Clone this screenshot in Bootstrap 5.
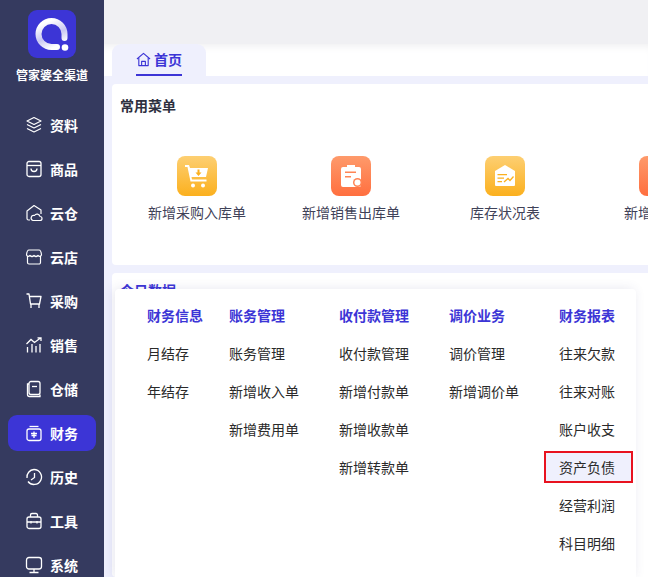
<!DOCTYPE html>
<html lang="zh-CN">
<head>
<meta charset="utf-8">
<title>管家婆全渠道</title>
<link href="https://cdn.jsdelivr.net/npm/bootstrap@5.3.0/dist/css/bootstrap.min.css" rel="stylesheet">
<style>
html,body{height:100%;margin:0;overflow:hidden}
body{font-family:"Noto Sans CJK SC","Liberation Sans",sans-serif;font-size:14px;color:#333;background:#fff}
.shell{height:577px;width:648px;overflow:hidden}
.side{width:104px;flex:none;background:#353a5f;color:#fff}
.brand{padding-top:10px;height:103px}
.logo{width:48px;height:48px;border-radius:9px;background:#3c35d6}
.brand-name{font-size:12px;font-weight:700;line-height:16px;margin-top:9px;letter-spacing:0}
.side-item{height:44px;padding:0 8px}
.side-link{height:36px;width:88px;border-radius:9px;font-weight:700;font-size:14px;padding-left:17px;gap:7px;color:#fff}
.side-link svg{width:18px;height:18px;flex:none}
.side-link.on{background:#3c35d6}
.main{flex:1 1 auto;min-width:0;background:#eff0fd;position:relative}
.topbar{height:44px;background:#f0f0f3}
.tabbar{height:32px;background:#fff;padding-left:8px;box-shadow:inset 0 8px 8px -6px #eeeef0}
.tab{width:94px;height:32px;background:#eff0fd;border-radius:9px 9px 0 0;color:#3c35d6;font-weight:700;padding-left:24px}
.tab-in{height:32px;gap:3px;border-bottom:2px solid #3c35d6;width:46px}
.tab-in svg{width:15px;height:15px;flex:none}
.panel{margin:8px 0 0 8px;background:#fff;border-radius:4px 0 0 4px}
.panel-a{height:181px;padding:11px 8px 0}
.panel-b{height:304px;padding:7px 8px 0}
.panel-title{font-size:14px;font-weight:700;line-height:20px;color:#2e3040}
.panel-title.blue{color:#3c35d6}
.quick{margin-top:41px;width:640px}
.quick-item{width:154px;flex:none;color:#3f4258;font-size:14px}
.qicon{width:40px;height:40px;border-radius:8px;margin-bottom:7px}
.qicon svg{width:28px;height:28px}
.q-y{background:linear-gradient(#fdcf72,#fbb01e)}
.q-o{background:linear-gradient(#fe9a6b,#ff6f3f)}
.quick-label{line-height:18px;white-space:nowrap}
.menu{position:absolute;left:11px;top:289px;width:521px;height:288px;background:#fff;box-shadow:-2px 0 12px rgba(60,60,120,.12);padding:15px 0 0 32px;border-radius:4px 4px 0 0}
.m-col{flex:none}
.m-head{height:22px;line-height:22px;color:#3c35d6;font-size:14px;font-weight:700;margin-bottom:11px;white-space:nowrap}
.m-link{height:32px;line-height:32px;margin-bottom:6px;font-size:14px;color:#2a2a2a;white-space:nowrap}
.m-link.hit{background:#eff0fd;outline:2px solid #e8121f;outline-offset:-2px;margin:0 0 6px -15px;padding-left:15px;width:89px}
.c1{width:82px}.c2{width:110px}
</style>
</head>
<body>
<div class="shell d-flex">
<aside class="side">
  <div class="brand d-flex flex-column align-items-center">
    <div class="logo d-flex align-items-center justify-content-center">
      <svg width="36" height="36" viewBox="0 0 36 36"><defs><linearGradient id="lg" x1="0.2" y1="0.1" x2="0.6" y2="1"><stop offset="0" stop-color="#fff"/><stop offset=".55" stop-color="#c9c7f2"/><stop offset="1" stop-color="#fff"/></linearGradient></defs><path d="M30.500 22V18A13 13 0 1 0 17.500 31H23" fill="none" stroke="url(#lg)" stroke-width="6" stroke-linecap="round"/><circle cx="31" cy="31.500" r="3.300" fill="#fff"/></svg>
    </div>
    <div class="brand-name">管家婆全渠道</div>
  </div>
  <div class="side-item d-flex align-items-center"><div class="side-link d-flex align-items-center"><svg viewBox="0 0 18 18" fill="none" stroke="#fff" stroke-width="1.2" stroke-linejoin="round"><path d="M9 1.500 16 5 9 8.500 2 5Z"/><path d="M2 8.500 9 12 16 8.500"/><path d="M2 12.500 9 16 16 12.500"/></svg><span>资料</span></div></div>
  <div class="side-item d-flex align-items-center"><div class="side-link d-flex align-items-center"><svg viewBox="0 0 18 18" fill="none" stroke="#fff" stroke-width="1.3"><rect x="2" y="1.500" width="14" height="15" rx="2"/><path d="M2 5.500H16"/><path d="M6 8.500C6 12.500 12 12.500 12 8.500"/></svg><span>商品</span></div></div>
  <div class="side-item d-flex align-items-center"><div class="side-link d-flex align-items-center"><svg viewBox="0 0 18 18" fill="none" stroke="#fff" stroke-width="1.2" stroke-linejoin="round"><path d="M5 16H3.500A1.500 1.500 0 0 1 2 14.500V7L9 1.500 16 6V10"/><path d="M8 16.500H15A2 2 0 0 0 15 12.500 3 3 0 0 0 9.500 11.500 2.500 2.500 0 0 0 8 16.500Z"/></svg><span>云仓</span></div></div>
  <div class="side-item d-flex align-items-center"><div class="side-link d-flex align-items-center"><svg viewBox="0 0 18 18" fill="none" stroke="#fff" stroke-width="1.2" stroke-linejoin="round"><path d="M4 2H14Q16 2 16.500 7Q15 9.500 13 7.500 11 9.500 9 7.500 7 9.500 5 7.500 3 9.500 1.500 7 2 2 4 2Z"/><path d="M2.500 8V14.500A1.500 1.500 0 0 0 4 16H14A1.500 1.500 0 0 0 15.500 14.500V8"/></svg><span>云店</span></div></div>
  <div class="side-item d-flex align-items-center"><div class="side-link d-flex align-items-center"><svg viewBox="0 0 18 18" fill="none" stroke="#fff" stroke-width="1.3" stroke-linejoin="round"><path d="M1.500 2H4L5.500 12H14.500L16 4.500H4.500"/><path d="M6 12V16M14 12V16"/></svg><span>采购</span></div></div>
  <div class="side-item d-flex align-items-center"><div class="side-link d-flex align-items-center"><svg viewBox="0 0 18 18" fill="none" stroke="#fff" stroke-width="1.3"><path d="M1.500 8 6 3.500 9.500 6.500 15.500 2M12.500 1.800H16V5"/><path d="M2.500 11V16.500M7 8V16.500M11 10V16.500M15 8V16.500"/></svg><span>销售</span></div></div>
  <div class="side-item d-flex align-items-center"><div class="side-link d-flex align-items-center"><svg viewBox="0 0 18 18" fill="none" stroke="#fff" stroke-width="1.3"><rect x="4" y="1.500" width="11" height="13" rx="2"/><path d="M4 4H2.500V14.500A2 2 0 0 0 4.500 16.500H15V14.500"/><path d="M7 6.500H12"/></svg><span>仓储</span></div></div>
  <div class="side-item d-flex align-items-center"><div class="side-link on d-flex align-items-center"><svg viewBox="0 0 18 18" fill="none" stroke="#fff" stroke-width="1.3"><rect x="2" y="5" width="14" height="11.500" rx="2"/><path d="M4.500 2.500H13.500"/><path d="M9 7.500V14M6 9.500H12M6.500 11.500H11.500"/></svg><span>财务</span></div></div>
  <div class="side-item d-flex align-items-center"><div class="side-link d-flex align-items-center"><svg viewBox="0 0 18 18" fill="none" stroke="#fff" stroke-width="1.3"><path d="M9 1.500A7.500 7.500 0 1 1 3 13.500"/><path d="M9 1.500A7.500 7.500 0 0 0 2 10"/><path d="M9.500 5V9.500L6 12"/></svg><span>历史</span></div></div>
  <div class="side-item d-flex align-items-center"><div class="side-link d-flex align-items-center"><svg viewBox="0 0 18 18" fill="none" stroke="#fff" stroke-width="1.3"><rect x="2" y="5" width="14" height="11.500" rx="2"/><path d="M5.500 5V3A1.500 1.500 0 0 1 7 1.500H11A1.500 1.500 0 0 1 12.500 3V5"/><path d="M2 10H16M6 9V11.500M12 9V11.500"/></svg><span>工具</span></div></div>
  <div class="side-item d-flex align-items-center"><div class="side-link d-flex align-items-center"><svg viewBox="0 0 18 18" fill="none" stroke="#fff" stroke-width="1.3"><rect x="1.500" y="1.500" width="15" height="11.500" rx="2.500"/><path d="M9 13V16.500M4.500 16.500H13.500"/></svg><span>系统</span></div></div>
</aside>
<main class="main">
  <div class="topbar"></div>
  <div class="tabbar"><div class="tab"><div class="tab-in d-flex align-items-center"><svg viewBox="0 0 16 16" fill="none" stroke="#3c35d6" stroke-width="1.200" stroke-linejoin="round"><path d="M1 7.500 8 1.500 15 7.500"/><path d="M3 6.500V14.500H13V6.500"/><path d="M6 14.500V10H10V14.500"/></svg><span>首页</span></div></div></div>
  <section class="panel panel-a">
    <div class="panel-title">常用菜单</div>
    <div class="quick d-flex">
      <div class="quick-item d-flex flex-column align-items-center"><div class="qicon q-y d-flex align-items-center justify-content-center"><svg viewBox="0 0 28 28" fill="#fff"><path d="M2 3H6L7 6H25L23 15H8.500L9 17.500H23.500V19.500H7.500L4.500 5H2Z"/><circle cx="10" cy="23.500" r="2"/><circle cx="20" cy="23.500" r="2"/><path d="M14.500 7.500H16.500V10.500H18.500L15.500 14 12.500 10.500H14.500Z" fill="#fbb01e"/></svg></div><div class="quick-label">新增采购入库单</div></div>
      <div class="quick-item d-flex flex-column align-items-center"><div class="qicon q-o d-flex align-items-center justify-content-center"><svg viewBox="0 0 28 28" fill="#fff"><path d="M10 3H18V5H22A2 2 0 0 1 24 7V23A2 2 0 0 1 22 25H6A2 2 0 0 1 4 23V7A2 2 0 0 1 6 5H10Z"/><path d="M8 9.500H19V11H8ZM8 14H14V15.500H8Z" fill="#ff8555"/><circle cx="20.500" cy="20.500" r="4.500" fill="#ff8555"/><circle cx="20.500" cy="20.500" r="3" fill="#fff"/></svg></div><div class="quick-label">新增销售出库单</div></div>
      <div class="quick-item d-flex flex-column align-items-center"><div class="qicon q-y d-flex align-items-center justify-content-center"><svg viewBox="0 0 28 28" fill="#fff"><path d="M14 3 24 9V23A1 1 0 0 1 23 24H5A1 1 0 0 1 4 23V9Z"/><path d="M6.500 12H16V13.200H6.500ZM6.500 15.500H13V16.700H6.500ZM6.500 19H11V20.200H6.500Z" fill="#fbb01e"/><path d="M13 20 17 16.500 19 18.500 22.500 14.500" fill="none" stroke="#fbb01e" stroke-width="1.300"/></svg></div><div class="quick-label">库存状况表</div></div>
      <div class="quick-item d-flex flex-column align-items-center"><div class="qicon q-o"></div><div class="quick-label">新增销售单</div></div>
    </div>
  </section>
  <section class="panel panel-b"><div class="panel-title blue">今日数据</div></section>
  <div class="menu d-flex">
    <div class="m-col c1"><div class="m-head">财务信息</div><div class="m-link">月结存</div><div class="m-link">年结存</div></div>
    <div class="m-col c2"><div class="m-head">账务管理</div><div class="m-link">账务管理</div><div class="m-link">新增收入单</div><div class="m-link">新增费用单</div></div>
    <div class="m-col c2"><div class="m-head">收付款管理</div><div class="m-link">收付款管理</div><div class="m-link">新增付款单</div><div class="m-link">新增收款单</div><div class="m-link">新增转款单</div></div>
    <div class="m-col c2"><div class="m-head">调价业务</div><div class="m-link">调价管理</div><div class="m-link">新增调价单</div></div>
    <div class="m-col"><div class="m-head">财务报表</div><div class="m-link">往来欠款</div><div class="m-link">往来对账</div><div class="m-link">账户收支</div><div class="m-link hit">资产负债</div><div class="m-link">经营利润</div><div class="m-link">科目明细</div></div>
  </div>
</main>
</div>
</body>
</html>
